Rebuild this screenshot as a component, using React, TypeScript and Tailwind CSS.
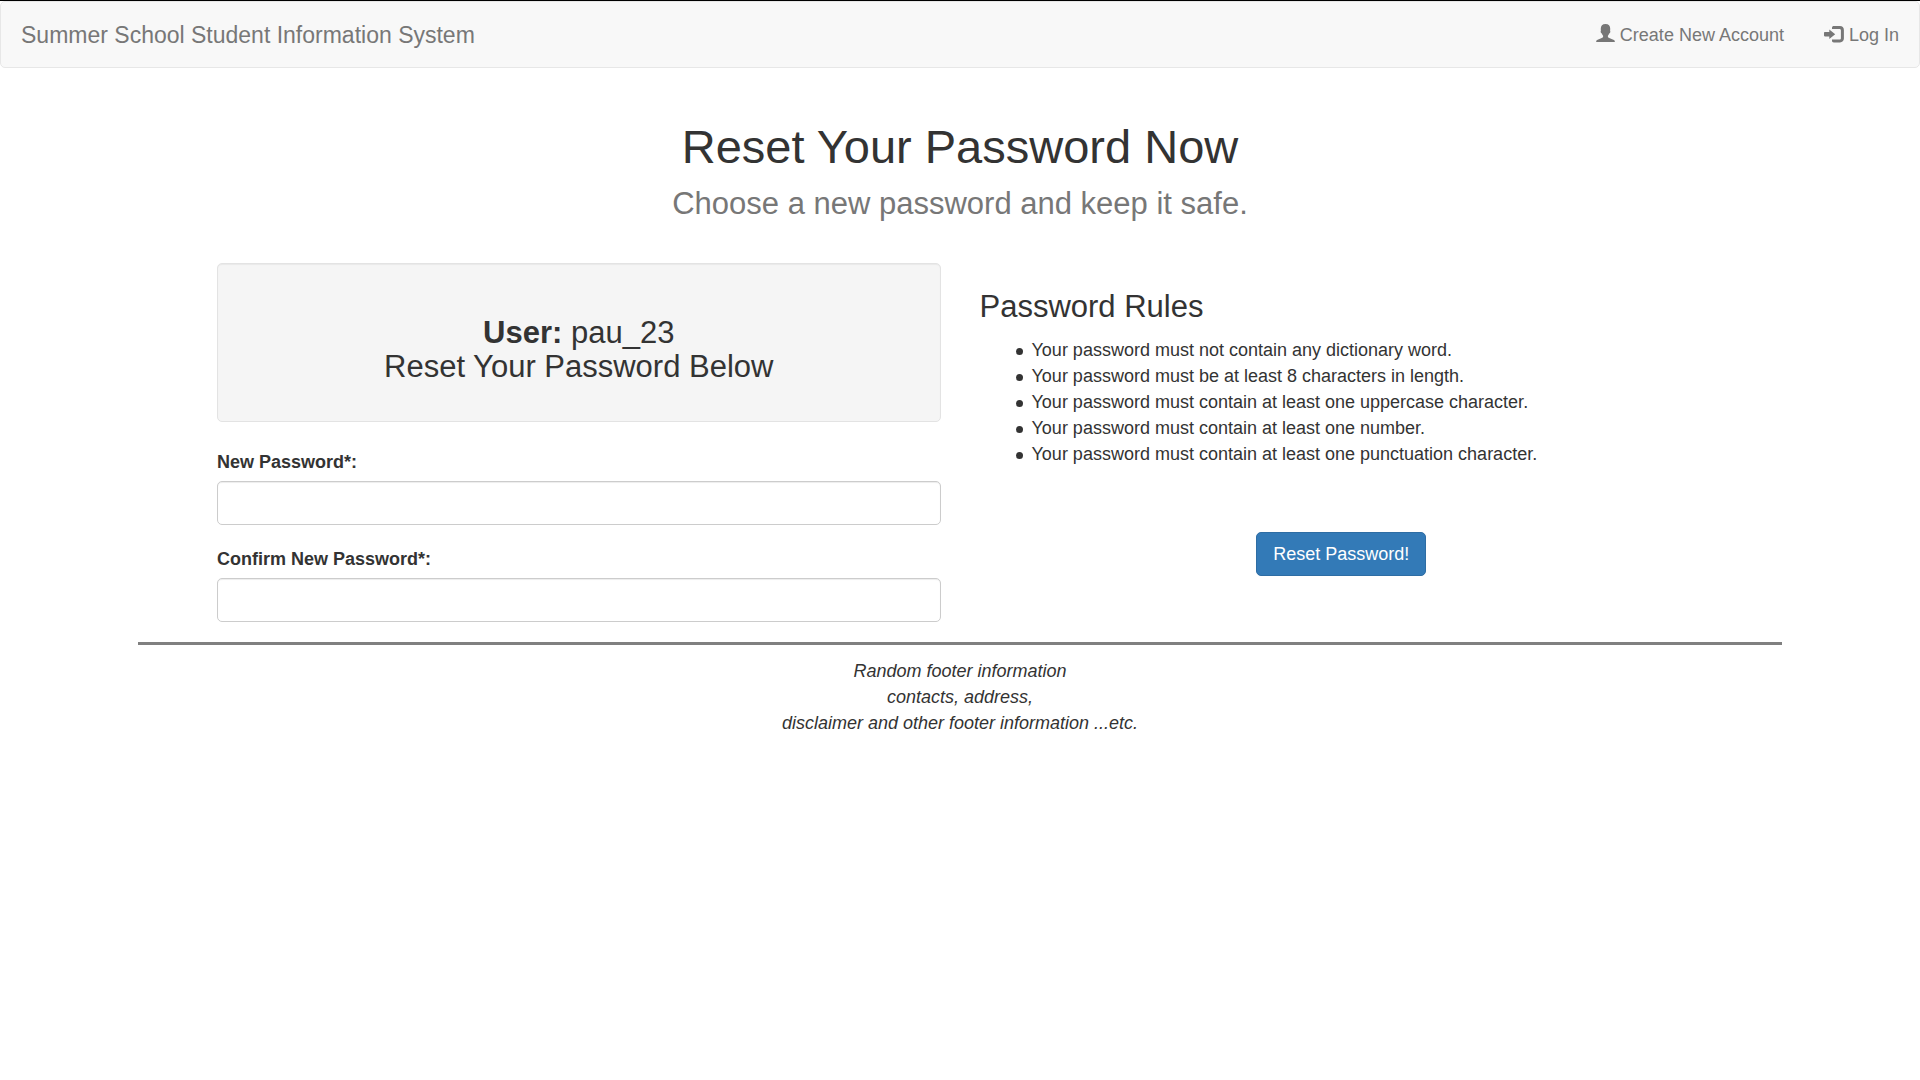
import type { ReactNode } from 'react';

const rules = [
  'Your password must not contain any dictionary word.',
  'Your password must be at least 8 characters in length.',
  'Your password must contain at least one uppercase character.',
  'Your password must contain at least one number.',
  'Your password must contain at least one punctuation character.',
];

function UserIcon() {
  return (
    <svg viewBox="0 0 19 18" className="mb-1 h-[18px] w-[19px]" fill="currentColor" aria-hidden="true">
      <path d="M9.500 0C12.700 0 14.200 1.900 14.200 4.600c0 1 0 1.600-.1 2.300.4.300.3 1.100-.1 1.900-.2.500-.5.700-.8.800-.3 1-.8 1.700-1.300 2.200v1c0 .5.300.8.800 1l4.600 1.900c1 .4 1.500.8 1.500 1.500V18H.2v-.8c0-.7.500-1.100 1.500-1.500l4.600-1.900c.5-.2.800-.5.800-1v-1c-.5-.5-1-1.200-1.300-2.200-.3-.1-.6-.3-.8-.8-.4-.8-.5-1.600-.1-1.900-.1-.7-.1-1.300-.1-2.300C4.800 1.900 6.300 0 9.500 0z" />
    </svg>
  );
}

function LogInIcon() {
  return (
    <svg viewBox="0 0 20 18" className="mb-0.5 h-[18px] w-5" fill="currentColor" aria-hidden="true">
      <path d="M8 2.700C8 1.700 8.800 1 9.800 1H16c2.300 0 3.900 1.600 3.900 3.900v8.600c0 2.300-1.600 3.900-3.900 3.900H9.800c-1 0-1.800-.7-1.800-1.700v-1.200h7.400c1 0 1.500-.5 1.500-1.500V5.400c0-1-.5-1.500-1.500-1.500H8z" />
      <path d="M5.300 4.400 11.200 9.200l-5.900 4.800v-2.600H.8c-.5 0-.8-.3-.8-.8V7.800c0-.5.3-.8.8-.8h4.500z" />
    </svg>
  );
}

function NavLink({ icon, children }: { icon: ReactNode; children: ReactNode }) {
  return (
    <a href="#" className="flex items-center gap-[5px] px-5 pt-5 pb-[19px] text-[#777777]">
      {icon}
      <span>{children}</span>
    </a>
  );
}

function PasswordField({ id, label }: { id: string; label: string }) {
  return (
    <div>
      <label htmlFor={id} className="mb-[6px] block font-bold">
        {label}
      </label>
      <input
        id={id}
        type="password"
        className="block h-11 w-full rounded-[5px] border border-[#cccccc] bg-white px-4 shadow-[inset_0_1px_1px_rgba(0,0,0,0.075)] outline-none focus:border-[#66afe9]"
      />
    </div>
  );
}

export default function App() {
  return (
    <div className="min-h-screen border-t border-black bg-white font-['Liberation_Sans',Arial,sans-serif] text-[18px] leading-[26px] text-[#333333]">
      <nav className="flex items-center justify-between rounded-[5px] border border-[#e7e7e7] bg-[#f8f8f8]">
        <a href="#" className="px-5 text-[23px] text-[#777777]">
          Summer School Student Information System
        </a>
        <div className="flex">
          <NavLink icon={<UserIcon />}>Create New Account</NavLink>
          <NavLink icon={<LogInIcon />}>Log In</NavLink>
        </div>
      </nav>

      <div className="mx-auto max-w-[1644px]">
        <header className="mt-[53px] mb-[42px] text-center">
          <h1 className="text-[47px] leading-[52px]">Reset Your Password Now</h1>
          <p className="mt-[14px] text-[31px] leading-[34px] text-[#777777]">
            Choose a new password and keep it safe.
          </p>
        </header>

        <form className="grid grid-cols-2 gap-x-[39px] px-[79px]">
          <div>
            <div className="mb-[27px] rounded-[5px] border border-[#e3e3e3] bg-[#f5f5f5] px-6 pt-[52px] pb-[37px] text-center shadow-[inset_0_1px_1px_rgba(0,0,0,0.05)]">
              <h3 className="text-[31px] leading-[34px]">
                <strong>User:</strong> pau_23
                <br />
                Reset Your Password Below
              </h3>
            </div>
            <div className="flex flex-col gap-[21px]">
              <PasswordField id="new-password" label="New Password*:" />
              <PasswordField id="confirm-password" label="Confirm New Password*:" />
            </div>
          </div>

          <div>
            <h3 className="mt-[27px] text-[31px] leading-[34px]">Password Rules</h3>
            <ul className="mt-[13px] pl-9">
              {rules.map((rule) => (
                <li
                  key={rule}
                  className="flex items-center gap-[9px] before:mt-0.5 before:size-[7px] before:shrink-0 before:rounded-full before:bg-[#333333]"
                >
                  {rule}
                </li>
              ))}
            </ul>
            <div className="mt-[65px] text-center">
              <button
                type="button"
                className="h-11 rounded-[5px] border border-[#2e6da4] bg-[#337ab7] px-4 text-white"
              >
                Reset Password!
              </button>
            </div>
          </div>
        </form>

        <footer className="mt-5 border-t-3 border-[#808080] pt-[13px] text-center italic">
          <p>Random footer information</p>
          <p>contacts, address,</p>
          <p>disclaimer and other footer information ...etc.</p>
        </footer>
      </div>
    </div>
  );
}
